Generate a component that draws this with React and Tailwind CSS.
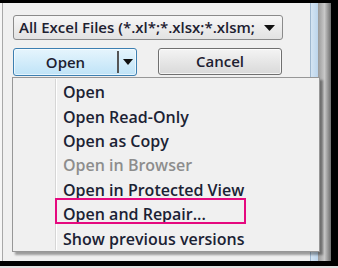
import React from "react";

const items = [
  { label: "Open" },
  { label: "Open Read-Only" },
  { label: "Open as Copy" },
  { label: "Open in Browser", disabled: true },
  { label: "Open in Protected View" },
  { label: "Open and Repair...", marked: true },
  { label: "Show previous versions" },
];

export default function App() {
  return (
    <div
      className="w-[338px] h-[268px] flex flex-col bg-[#e0e0e0] overflow-hidden"
      style={{ fontFamily: '"Open Sans", "Noto Sans", sans-serif' }}
    >
      <div className="h-[3px] bg-black" />
      <div className="flex h-[258px]">
        <div className="w-[2px] bg-[#f6f6f6]" />
        <div className="w-px bg-[#a8a8a8]" />
        <div className="relative flex-1 bg-[#f0f0f0] pl-[10px] pt-[12px]">
          {/* file type combo */}
          <div className="w-[270px] h-[25px] flex items-center justify-between pl-[5px] pr-[7px] rounded-[3px] border border-[#8b8b8b] bg-gradient-to-b from-[#f7f7f7] to-[#e2e2e2]">
            <span className="text-[15px] font-semibold text-[#1d2030] leading-none whitespace-nowrap">
              All Excel Files (*.xl*;*.xlsx;*.xlsm;
            </span>
            <svg width="11" height="6" viewBox="0 0 11 6">
              <path d="M0 0h11L5.5 6z" fill="#111" />
            </svg>
          </div>

          {/* buttons */}
          <div className="flex gap-[21px] mt-[8px]">
            <div className="w-[124px] h-[28px] flex rounded-[3px] border border-[#3c7fb1] bg-gradient-to-b from-[#e6f5fd] to-[#bfe3f7] shadow-[inset_0_0_0_1px_rgba(255,255,255,0.6)]">
              <div className="flex-1 flex items-center justify-center text-[15px] font-semibold text-[#1d2030]">
                Open
              </div>
              <div className="w-[2px] my-[2px] bg-[#555]" />
              <div className="w-[17px] flex items-center justify-center">
                <svg width="10" height="6" viewBox="0 0 10 6">
                  <path d="M0 0h10L5 6z" fill="#111" />
                </svg>
              </div>
            </div>
            <div className="w-[124px] h-[27px] flex items-center justify-center rounded-[3px] border border-[#707070] bg-gradient-to-b from-[#f4f4f4] to-[#d9d9d9] shadow-[inset_0_0_0_1px_rgba(255,255,255,0.7)] text-[15px] font-semibold text-[#1d2030]">
              Cancel
            </div>
          </div>

          {/* open options menu */}
          <div className="absolute z-10 left-[9px] top-[74px] w-[308px] h-[175px] border border-[#979797] bg-[#f0f0f0] shadow-[3px_3px_2px_rgba(0,0,0,0.35)]">
            <div className="absolute left-[42px] top-[1px] bottom-[1px] w-px bg-[#d6d6d6]" />
            <div className="absolute left-[43px] top-[1px] bottom-[1px] w-px bg-white" />
            <div className="relative flex flex-col pt-[2px]">
              {items.map((it) => (
                <div
                  key={it.label}
                  className={
                    "h-[24.4px] flex items-center pl-[50px] text-[16px] font-semibold whitespace-nowrap " +
                    (it.disabled ? "text-[#8d8d8d]" : "text-[#1b2234]")
                  }
                >
                  {it.label}
                </div>
              ))}
            </div>
            <div className="absolute left-[42px] top-[120px] w-[191px] h-[26px] border-2 border-[#e5097f]" />
          </div>
        </div>
        <div className="w-[8px] bg-gradient-to-r from-[#d4e4f2] to-[#bcd5ec] border-l border-[#9fb8d0]" />
        <div className="w-[13px] bg-gradient-to-r from-[#9a9a9a] via-[#c8c8c8] to-[#6e6e6e]" />
        <div className="w-[7px] bg-black" />
      </div>
      <div className="h-[5px] bg-black" />
    </div>
  );
}
